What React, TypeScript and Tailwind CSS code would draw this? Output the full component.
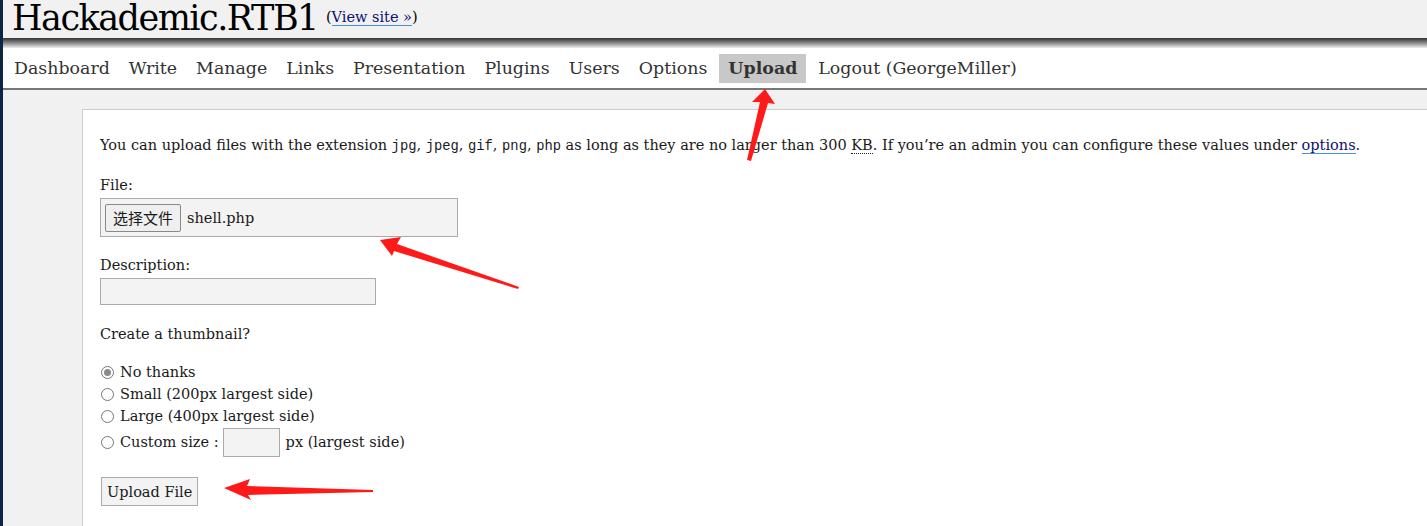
import React from "react";

const serif = { fontFamily: '"DejaVu Serif", Georgia, serif' };

const navItems = ["Dashboard", "Write", "Manage", "Links", "Presentation", "Plugins", "Users", "Options", "Upload", "Logout (GeorgeMiller)"];

const Radio = ({ checked }: { checked?: boolean }) => (
    <span className="inline-flex h-[13px] w-[13px] items-center justify-center rounded-full border border-[#767676] bg-white mr-[6px] ml-[1px] shrink-0">
        {checked && <span className="h-[7px] w-[7px] rounded-full bg-[#8a8a8a]" />}
    </span>
);

const Code = ({ children }: { children: React.ReactNode }) => (
    <span className="font-['Liberation_Mono',monospace] text-[13.8px]">{children}</span>
);

const Arrows = () => (
    <svg className="pointer-events-none absolute left-0 top-0" width="1427" height="526">
        <polygon points="765,89 775,104 768,103 751,161 747,160 760,102 752,102" fill="#ff1a1a" />
        <polygon points="380,240 401,237 397,244 519,287 518,289 394,251 392,256" fill="#ff1a1a" />
        <polygon points="224,488 250,479 247,486 373,490 373,492 248,495 251,500" fill="#ff1a1a" />
    </svg>
);

export default function App() {
    return (
        <div className="relative h-[526px] w-[1427px] overflow-hidden bg-[#f1f1f1] text-[#1a1a1a]" style={serif}>
            <div className="flex h-full border-l-[3px] border-[#0d2644]">
                <div className="flex flex-1 flex-col">
                    <header className="flex h-[38px] items-end gap-[8px] pl-[9px]">
                        <h1 className="mb-[2px] text-[35px] leading-none tracking-[-1.5px] text-black">Hackademic.RTB1</h1>
                        <span className="mb-[9px] text-[14.5px] text-black">
                            (<a className="border-b border-[#4a90d9] text-[#10106e]">View site »</a>)
                        </span>
                    </header>
                    <div className="h-[10px] bg-gradient-to-b from-[#333] to-[#eee]" />
                    <nav className="flex h-[42px] items-center gap-[5px] border-b-2 border-[#777] bg-white pl-[4px] text-[17.4px] text-[#333]">
                        {navItems.map((item) => (
                            <span
                                key={item}
                                className={item === "Upload" ? "h-[29px] bg-[#c8c8c8] px-[9px] font-bold leading-[29px]" : "h-[29px] px-[7px] leading-[29px]"}
                            >
                                {item}
                            </span>
                        ))}
                    </nav>
                    <div className="flex-1 pl-[79px] pt-[19px]">
                        <main className="h-full border-l border-t border-[#ccc] bg-white pl-[17px] pt-[25px] text-[14.5px] leading-[20px]">
                            <p>
                                You can upload files with the extension <Code>jpg</Code>, <Code>jpeg</Code>, <Code>gif</Code>, <Code>png</Code>, <Code>php</Code> as long as they are no larger than 300{" "}
                                <abbr className="no-underline border-b border-dotted border-[#222]">KB</abbr>. If you’re an admin you can configure these values under{" "}
                                <a className="border-b border-[#4a90d9] text-[#10106e]">options</a>.
                            </p>
                            <div className="mt-[18px]">File:</div>
                            <div className="mt-[3px] flex h-[39px] w-[358px] items-center border border-[#aaa] bg-[#f3f3f3] pl-[4px]">
                                <button className="h-[28px] rounded-[2px] border border-[#888] bg-[#efefef] px-[7px] font-['Noto_Sans_CJK_SC',sans-serif] text-[15px] leading-none">选择文件</button>
                                <span className="ml-[6px]">shell.php</span>
                            </div>
                            <div className="mt-[18px]">Description:</div>
                            <div className="mt-[3px] h-[27px] w-[276px] border border-[#aaa] bg-[#f3f3f3]" />
                            <div className="mt-[19px]">Create a thumbnail?</div>
                            <div className="mt-[17px] flex flex-col">
                                <label className="flex h-[22px] items-center"><Radio checked />No thanks</label>
                                <label className="flex h-[22px] items-center"><Radio />Small (200px largest side)</label>
                                <label className="flex h-[22px] items-center"><Radio />Large (400px largest side)</label>
                                <label className="flex h-[30px] items-center">
                                    <Radio />Custom size :
                                    <span className="ml-[4px] mr-[6px] h-[29px] w-[57px] border border-[#aaa] bg-[#f3f3f3]" />
                                    px (largest side)
                                </label>
                            </div>
                            <button className="ml-[1px] mt-[20px] h-[29px] border border-[#aaa] bg-[#f3f3f3] px-[5px]">Upload File</button>
                        </main>
                    </div>
                </div>
            </div>
            <Arrows />
        </div>
    );
}
